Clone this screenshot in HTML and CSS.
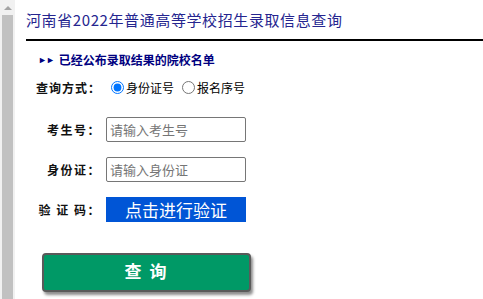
FILE: index.html
```html
<!DOCTYPE html>
<html lang="zh-CN">
<head>
<meta charset="utf-8">
<title>河南省2022年普通高等学校招生录取信息查询</title>
<link rel="stylesheet" href="styles.css">
</head>
<body>
<div class="page">
  <div class="scrollbar">
    <div class="arrow-box"><span class="arrow-up"></span></div>
    <div class="thumb"></div>
  </div>
  <div class="main">
    <h1 class="title">河南省2022年普通高等学校招生录取信息查询</h1>
    <a class="notice" href="#"><span class="arrows">&#9658;&#9658;</span> 已经公布录取结果的院校名单</a>
    <div class="mode">
      <span class="mode-label">查询方式：</span>
      <label class="opt"><input type="radio" name="mode" checked>身份证号</label>
      <label class="opt"><input type="radio" name="mode">报名序号</label>
    </div>
    <div class="form">
      <span class="label">考生号：</span>
      <input class="field" type="text" placeholder="请输入考生号">
      <span class="label">身份证：</span>
      <input class="field" type="text" placeholder="请输入身份证">
      <span class="label">验 证 码：</span>
      <div class="verify">点击进行验证</div>
    </div>
    <button class="submit" type="button">查 询</button>
  </div>
</div>
</body>
</html>
```

FILE: styles.css
```css
html, body {
  margin: 0;
  padding: 0;
  background: #fff;
  overflow: hidden;
}
body {
  font-family: "Noto Sans CJK SC", "Noto Sans", "Liberation Sans", sans-serif;
  color: #000;
}
.page {
  display: flex;
  height: 299px;
}
.scrollbar {
  width: 15px;
  flex: 0 0 15px;
  background: #f1f1f1;
  display: flex;
  flex-direction: column;
}
.arrow-box {
  height: 15px;
  display: flex;
  justify-content: center;
  align-items: center;
}
.arrow-up {
  width: 0;
  height: 0;
  border-left: 4px solid transparent;
  border-right: 4px solid transparent;
  border-bottom: 4px solid #a3a3a3;
}
.thumb {
  flex: 1;
  margin: 0 2px 0 2px;
  background: #c1c1c1;
}
.main {
  flex: 1;
  padding-left: 11px;
  display: flex;
  flex-direction: column;
  align-items: flex-start;
}
.title {
  align-self: stretch;
  margin: 0;
  padding: 10px 0 9px 0;
  font-size: 15px;
  line-height: 20px;
  font-weight: normal;
  letter-spacing: 0.6px;
  color: #25258f;
  border-bottom: 2px solid #000;
}
.notice {
  margin: 11px 0 0 12px;
  font-size: 12px;
  line-height: 16px;
  font-weight: bold;
  color: #000080;
  text-decoration: none;
  display: flex;
  align-items: center;
}
.arrows {
  font-size: 9px;
  letter-spacing: -1px;
  margin-right: 5px;
}
.mode {
  margin: 11px 0 0 10px;
  display: flex;
  align-items: center;
  height: 16px;
  font-size: 12px;
}
.mode-label {
  font-weight: bold;
  letter-spacing: 1px;
  color: #111;
  margin-right: 6px;
}
.opt {
  display: flex;
  align-items: center;
  margin-right: 4px;
}
.opt input {
  width: 13px;
  height: 13px;
  margin: 0 2px 0 4px;
}
.form {
  margin-top: 22px;
  display: grid;
  grid-template-columns: 75px 140px;
  column-gap: 5px;
  row-gap: 15px;
  align-items: center;
}
.label {
  justify-self: end;
  font-size: 12px;
  font-weight: bold;
  letter-spacing: 1.5px;
  color: #111;
  white-space: pre;
}
.field {
  box-sizing: border-box;
  width: 140px;
  height: 25px;
  margin: 0;
  padding: 0 3px;
  border: 1px solid #767676;
  border-radius: 2px;
  font-family: inherit;
  font-size: 13px;
  outline: none;
}
.field::placeholder {
  color: #757575;
}
.verify {
  width: 140px;
  height: 25px;
  background: #0055d6;
  color: #fff;
  font-size: 17px;
  line-height: 25px;
  text-align: center;
}
.submit {
  margin: 31px 0 0 16px;
  box-sizing: border-box;
  width: 209px;
  height: 39px;
  background: #009966;
  border: 2px solid #5a5a5a;
  border-radius: 4px;
  box-shadow: 2px 3px 3px rgba(0, 0, 0, 0.45);
  color: #fff;
  font-family: inherit;
  font-size: 17px;
  font-weight: bold;
  letter-spacing: 2px;
  line-height: 20px;
  padding: 0 0 3px 0;
}
```
